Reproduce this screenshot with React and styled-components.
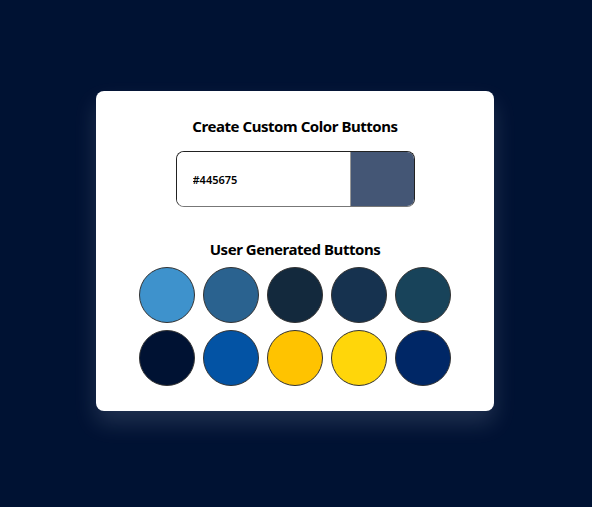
import React, { useState } from "react";
import styled, { createGlobalStyle } from "styled-components";

const GlobalStyle = createGlobalStyle`
  html, body {
    margin: 0;
    padding: 0;
    background-color: #001233;
    font-family: "Noto Sans", "Open Sans", sans-serif;
  }
`;

const Page = styled.div`
  min-height: 100vh;
  display: flex;
  justify-content: center;
  align-items: flex-start;
  padding: 91px 2px 0 0;
  box-sizing: border-box;
`;

const Card = styled.div`
  width: 398px;
  height: 320px;
  box-sizing: border-box;
  background-color: white;
  border-radius: 8px;
  padding-top: 24px;
  display: flex;
  flex-direction: column;
  align-items: center;
  box-shadow: 0 12px 22px rgba(200, 210, 230, 0.16);
`;

const Title = styled.h3`
  margin: 0;
  font-size: 15px;
  line-height: 22px;
  font-weight: 700;
  letter-spacing: -0.45px;
  color: #000;
`;

const InputGroup = styled.div`
  margin-top: 14px;
  width: 239px;
  height: 56px;
  display: flex;
  border: 1px solid #222;
  border-bottom-color: #777;
  border-radius: 8px;
  overflow: hidden;
  box-sizing: border-box;
`;

const HexInput = styled.input`
  flex: 1;
  min-width: 0;
  border: none;
  border-right: 1px solid #999;
  outline: none;
  padding: 0 0 0 16px;
  font-family: "Noto Sans", "Open Sans", sans-serif;
  font-size: 11px;
  font-weight: 600;
  color: #000;
`;

const Swatch = styled.div`
  width: 63px;
  background-color: ${(p) => p.$color};
`;

const SubTitle = styled(Title)`
  margin-top: 31px;
`;

const Grid = styled.div`
  margin-top: 7px;
  display: grid;
  grid-template-columns: repeat(5, 56px);
  column-gap: 8px;
  row-gap: 7px;
`;

const ColorButton = styled.button`
  width: 56px;
  height: 56px;
  border-radius: 50%;
  border: 1px solid #333;
  padding: 0;
  background-color: ${(p) => p.$color};
  cursor: pointer;
`;

const colors = [
  "#3E92CC",
  "#2A628F",
  "#13293D",
  "#16324F",
  "#18435A",
  "#001233",
  "#0353A4",
  "#FFC300",
  "#FFD60A",
  "#002766",
];

const App = () => {
  const [color, setColor] = useState("#445675");

  return (
    <Page>
      <GlobalStyle />
      <Card>
        <Title>Create Custom Color Buttons</Title>
        <InputGroup>
          <HexInput value={color} onChange={(e) => setColor(e.target.value)} />
          <Swatch $color={color} />
        </InputGroup>
        <SubTitle>User Generated Buttons</SubTitle>
        <Grid>
          {colors.map((c, i) => (
            <ColorButton key={i} $color={c} />
          ))}
        </Grid>
      </Card>
    </Page>
  );
};

export default App;
